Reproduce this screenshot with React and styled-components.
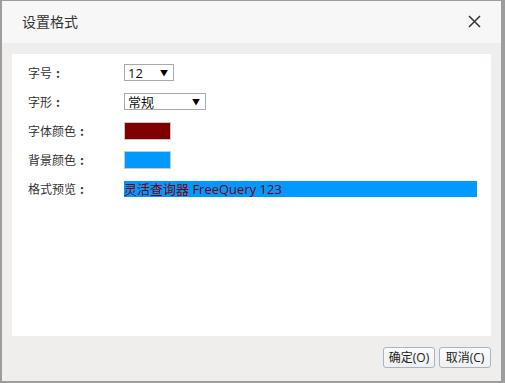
import React from "react";
import styled, { createGlobalStyle } from "styled-components";

const Global = createGlobalStyle`
  html, body { margin: 0; padding: 0; background: #9d9d9d; }
  body { width: 505px; height: 383px; overflow: hidden; font-family: "Noto Sans CJK SC", "Microsoft YaHei", sans-serif; }
`;

const Page = styled.div`
  padding: 1px 4px 2px 2px;
  height: 383px;
  box-sizing: border-box;
`;

const Dialog = styled.div`
  height: 100%;
  background: #efeeed;
  display: flex;
  flex-direction: column;
`;

const Header = styled.div`
  height: 42px;
  background: #f7f7f7;
  display: flex;
  align-items: center;
  justify-content: space-between;
  padding: 0 20px 0 20px;
  flex-shrink: 0;
`;

const Title = styled.div`
  font-size: 14px;
  color: #333;
  margin-top: -2px;
`;

const Close = styled.svg`
  width: 13px;
  height: 13px;
  margin-top: -1px;
`;

const Body = styled.div`
  flex: 1;
  display: flex;
  flex-direction: column;
  padding: 11px 10px 0 10px;
`;

const Panel = styled.div`
  background: #fff;
  height: 282px;
  box-sizing: border-box;
  padding: 4px 14px 0 16px;
`;

const Form = styled.div`
  display: grid;
  grid-template-columns: 96px 1fr;
  grid-auto-rows: 29px;
  align-items: center;
`;

const Label = styled.div`
  font-size: 12px;
  color: #333;
`;

const Colon = styled.span`
  margin-left: 4px;
  font-weight: bold;
`;

const Select = styled.div`
  width: ${(p) => p.w}px;
  height: 17px;
  box-sizing: border-box;
  border: 1px solid #a9a9a9;
  display: flex;
  align-items: center;
  justify-content: space-between;
  padding: 0 5px 0 3px;
  font-size: 13px;
  color: #111;
  background: #fff;
  font-family: "Open Sans", "Noto Sans CJK SC", sans-serif;
`;

const Arrow = styled.span`
  font-size: 8px;
  color: #000;
`;

const Swatch = styled.div`
  width: 47px;
  height: 18px;
  box-sizing: border-box;
  border: 1px solid #c8c8c8;
  background: ${(p) => p.c};
`;

const Preview = styled.div`
  width: 353px;
  height: 16px;
  background: #0099ff;
  color: #800000;
  font-size: 13px;
  line-height: 16px;
  white-space: nowrap;
  font-family: "Open Sans", "Noto Sans CJK SC", sans-serif;
`;

const Footer = styled.div`
  flex: 1;
  display: flex;
  justify-content: flex-end;
  align-items: center;
  gap: 4px;
  padding: 0 0 2px 0;
`;

const Button = styled.button`
  height: 21px;
  min-width: 52px;
  padding: 0 4px;
  border: 1px solid #a7b4c4;
  border-radius: 3px;
  background: linear-gradient(#fbfbfb, #f0f0f0);
  font-family: "Open Sans", "Noto Sans CJK SC", sans-serif;
  font-size: 12px;
  color: #222;
  line-height: 19px;
`;

export default function App() {
  return (
    <>
      <Global />
      <Page>
        <Dialog>
          <Header>
            <Title>设置格式</Title>
            <Close viewBox="0 0 13 13">
              <path d="M1 1 L12 12 M12 1 L1 12" stroke="#333" strokeWidth="1.5" fill="none" />
            </Close>
          </Header>
          <Body>
            <Panel>
              <Form>
                <Label>字号<Colon>:</Colon></Label>
                <Select w={50}>
                  <span>12</span>
                  <Arrow>▼</Arrow>
                </Select>
                <Label>字形<Colon>:</Colon></Label>
                <Select w={82}>
                  <span>常规</span>
                  <Arrow>▼</Arrow>
                </Select>
                <Label>字体颜色<Colon>:</Colon></Label>
                <Swatch c="#800000" />
                <Label>背景颜色<Colon>:</Colon></Label>
                <Swatch c="#0099ff" />
                <Label>格式预览<Colon>:</Colon></Label>
                <Preview>灵活查询器 FreeQuery 123</Preview>
              </Form>
            </Panel>
            <Footer>
              <Button>确定(O)</Button>
              <Button>取消(C)</Button>
            </Footer>
          </Body>
        </Dialog>
      </Page>
    </>
  );
}
